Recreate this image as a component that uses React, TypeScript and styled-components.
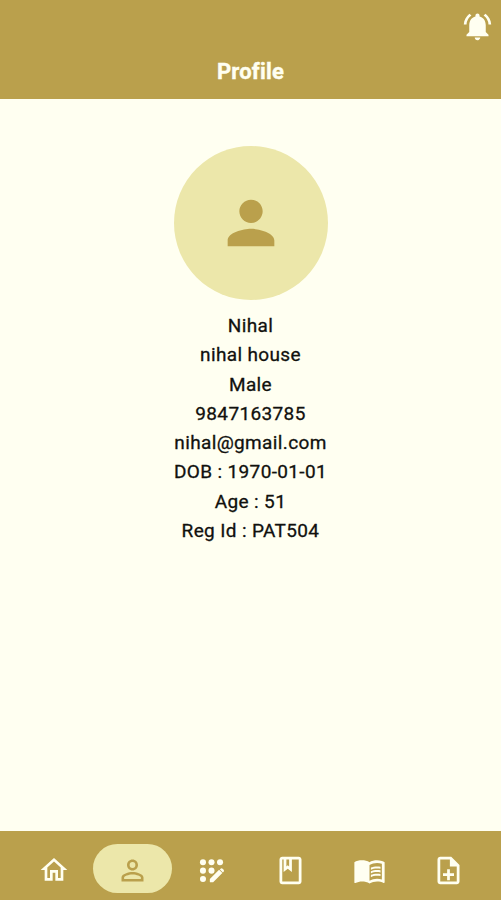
import React from 'react';
import styled, { createGlobalStyle } from 'styled-components';
import {
  MdNotificationsActive, MdPerson, MdOutlineHome, MdPersonOutline,
  MdOutlineClass, MdMenuBook, MdOutlineNoteAdd,
} from 'react-icons/md';

const GlobalStyle = createGlobalStyle`
  * { box-sizing: border-box; }
  body { margin: 0; background: #fffff1; font-family: Roboto, sans-serif; }
`;

const Screen = styled.div`
  width: 501px;
  height: 900px;
  display: flex;
  flex-direction: column;
  background: #fffff1;
  overflow: hidden;
`;

const Header = styled.header`
  height: 99px;
  flex: none;
  display: flex;
  flex-direction: column;
  background: #baa04c;
  color: #fffff1;
`;

const Actions = styled.div`
  height: 54px;
  display: flex;
  justify-content: flex-end;
  padding: 10px 7px 0 0;
`;

const Title = styled.h1`
  margin: 0;
  padding-top: 4px;
  font-size: 22px;
  line-height: 28px;
  font-weight: 700;
  letter-spacing: 0.2px;
  -webkit-text-stroke: 0.4px #fffff1;
  text-align: center;
`;

const Content = styled.main`
  flex: 1;
  display: flex;
  flex-direction: column;
  align-items: center;
  padding-top: 47px;
`;

const Avatar = styled.div`
  width: 154px;
  height: 154px;
  margin-bottom: 11px;
  border-radius: 50%;
  display: flex;
  align-items: center;
  justify-content: center;
  background: #ece7aa;
  color: #baa04c;
`;

const Detail = styled.div`
  height: 29.25px;
  font-size: 19px;
  line-height: 29.25px;
  font-weight: 400;
  letter-spacing: 0.36px;
  -webkit-text-stroke: 0.3px #11110e;
  color: #11110e;
  white-space: nowrap;
`;

const NavBar = styled.nav`
  height: 69px;
  flex: none;
  display: flex;
  align-items: center;
  justify-content: space-between;
  padding: 6px 13px 0 14px;
  background: #baa04c;
`;

const NavItem = styled.button<{ $active?: boolean }>`
  width: 79px;
  height: 49px;
  padding: 3px 0 0;
  border: 0;
  border-radius: 25px;
  display: flex;
  align-items: center;
  justify-content: center;
  background: ${(p) => (p.$active ? '#ece7aa' : 'transparent')};
  color: ${(p) => (p.$active ? '#baa04c' : '#fffff1')};
`;

const dots = [[5.8, 6], [12, 6], [18.2, 6], [5.8, 12.1], [12, 12.1], [5.8, 18.2]];

function RegistrationIcon({ size }: { size: number }) {
  return (
    <svg width={size} height={size} viewBox="0 0 24 24" fill="currentColor">
      {dots.map(([x, y]) => <circle key={`${x}-${y}`} cx={x} cy={y} r="2.2" />)}
      <path
        d="M10.8 20.4v-2.2l6.7-6.7 2.4 2.4-6.7 6.7h-2.1a.3.3 0 0 1-.3-.2Z"
        stroke="#baa04c"
        strokeWidth="1.2"
        paintOrder="stroke"
      />
      <path d="M18.6 10.7a1.1 1.1 0 0 1 1.5 0l.7.7a1.1 1.1 0 0 1 0 1.5l-.5.5-2.2-2.2.5-.5Z" />
    </svg>
  );
}

const details = [
  'Nihal', 'nihal house', 'Male', '9847163785',
  'nihal@gmail.com', 'DOB : 1970-01-01', 'Age : 51', 'Reg Id : PAT504',
];

const tabs = [
  { label: 'Home', Icon: MdOutlineHome, size: 32 },
  { label: 'Profile', Icon: MdPersonOutline, size: 33 },
  { label: 'Register', Icon: RegistrationIcon, size: 33 },
  { label: 'Bookings', Icon: MdOutlineClass, size: 33 },
  { label: 'Records', Icon: MdMenuBook, size: 33 },
  { label: 'Add note', Icon: MdOutlineNoteAdd, size: 33 },
];

export default function App() {
  return (
    <Screen>
      <GlobalStyle />
      <Header>
        <Actions><MdNotificationsActive size={33} /></Actions>
        <Title>Profile</Title>
      </Header>
      <Content>
        <Avatar><MdPerson size={70} /></Avatar>
        {details.map((text) => <Detail key={text}>{text}</Detail>)}
      </Content>
      <NavBar>
        {tabs.map(({ label, Icon, size }) => (
          <NavItem key={label} aria-label={label} $active={label === 'Profile'}>
            <Icon size={size} />
          </NavItem>
        ))}
      </NavBar>
    </Screen>
  );
}
